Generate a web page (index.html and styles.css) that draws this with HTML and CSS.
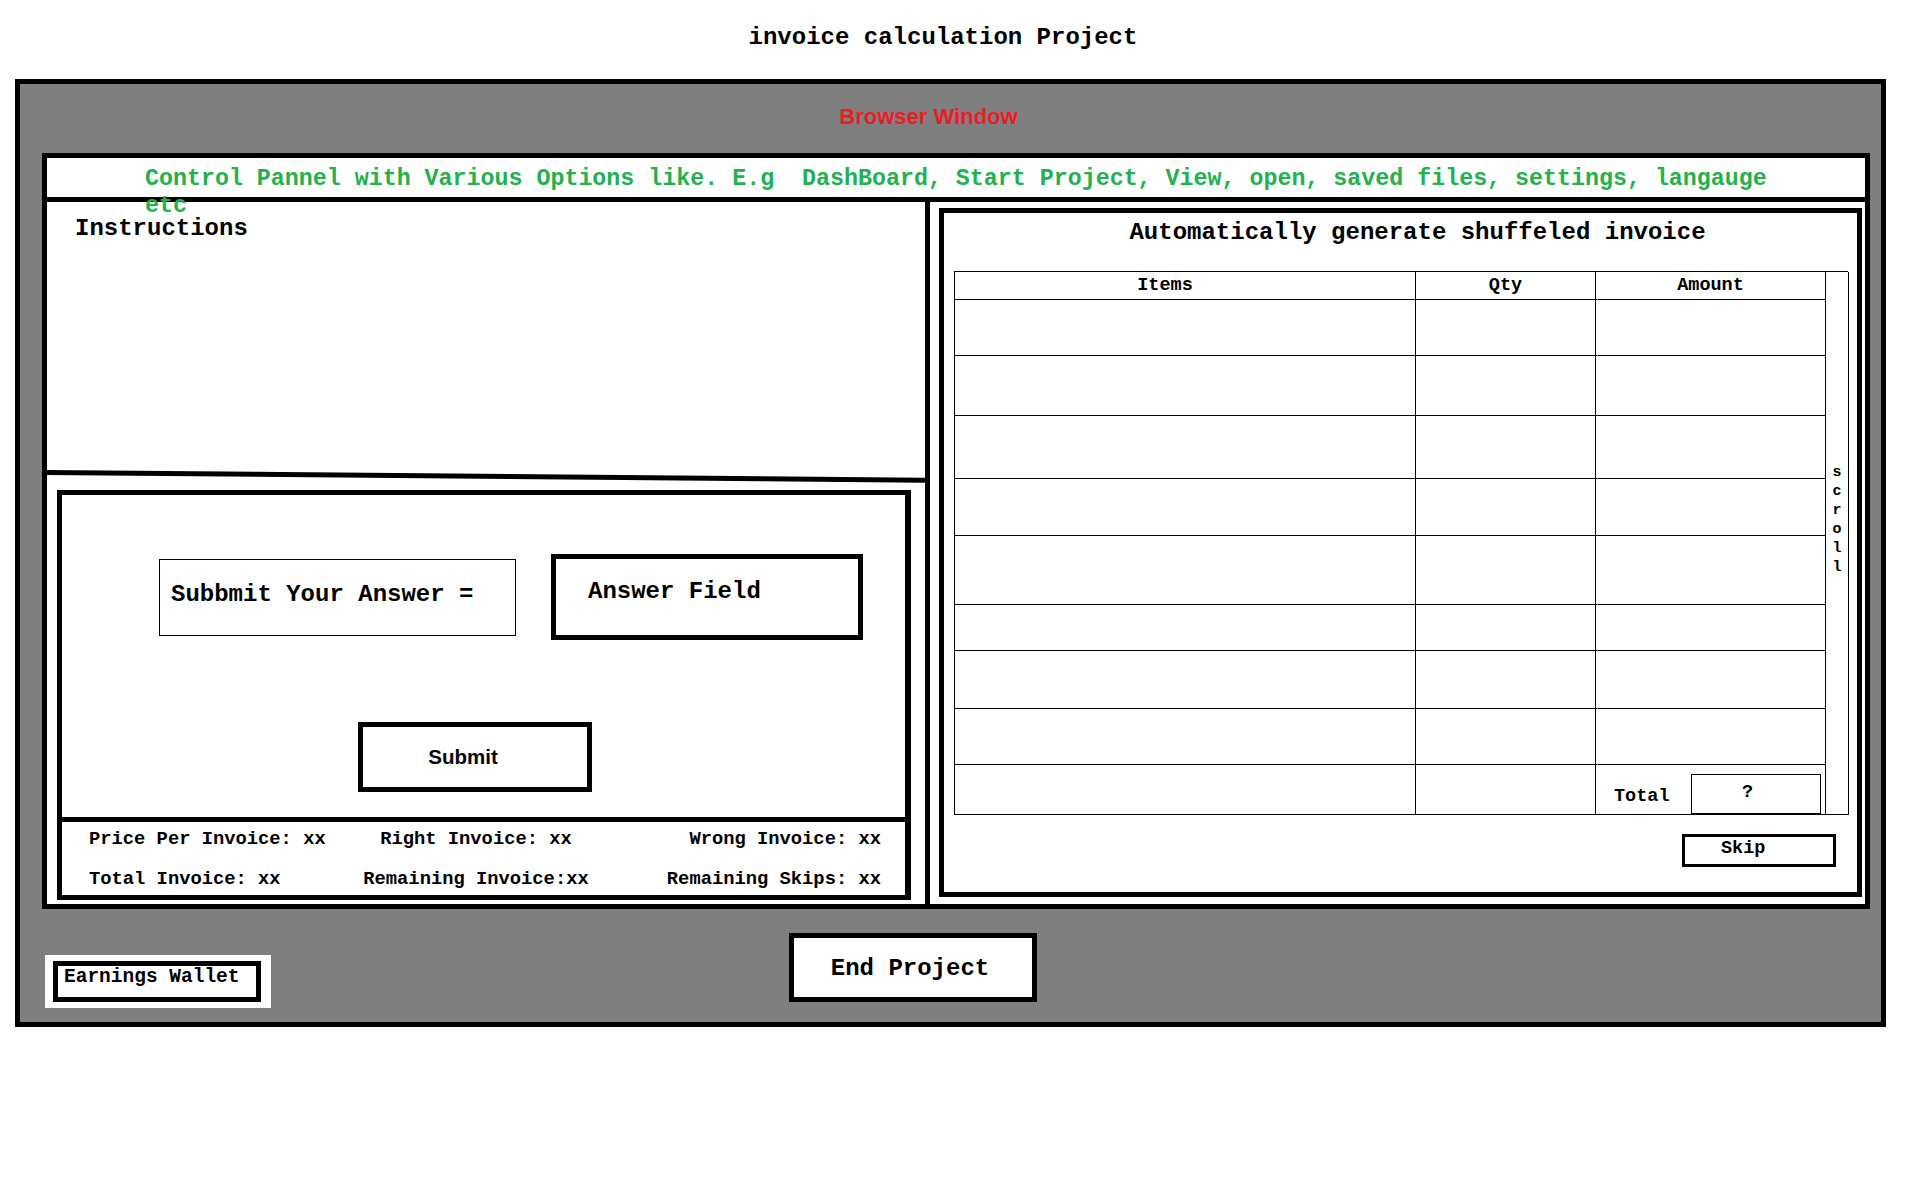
FILE: index.html
```html
<!DOCTYPE html>
<html lang="en">
<head>
<meta charset="utf-8">
<title>invoice calculation Project</title>
<link rel="stylesheet" href="styles.css">
</head>
<body>
<h1 class="page-title">invoice calculation Project</h1>
<div class="browser">
  <div class="browser-label">Browser Window</div>
  <div class="app">
    <div class="control-bar">
      <p class="control-text">Control Pannel with Various Options like. E.g&nbsp; DashBoard, Start Project, View, open, saved files, settings, langauge etc</p>
    </div>
    <div class="workspace">
      <div class="left-col">
        <div class="instructions">Instructions</div>
        <div class="section-line"></div>
        <div class="answer-box">
          <div class="answer-area">
            <div class="answer-row">
              <div class="prompt-box">Subbmit Your Answer =</div>
              <div class="field-box">Answer Field</div>
            </div>
            <button class="submit-btn">Submit</button>
          </div>
          <div class="stats">
            <span class="stat">Price Per Invoice: xx</span>
            <span class="stat stat-mid">Right Invoice: xx</span>
            <span class="stat stat-end">Wrong Invoice: xx</span>
            <span class="stat">Total Invoice: xx</span>
            <span class="stat stat-mid">Remaining Invoice:xx</span>
            <span class="stat stat-end">Remaining Skips: xx</span>
          </div>
        </div>
      </div>
      <div class="right-col">
        <div class="invoice">
          <h2 class="invoice-title">Automatically generate shuffeled invoice</h2>
          <div class="invoice-table">
            <div class="scroll-col"><span class="scroll-word">scroll</span></div>
            <div class="cell th th-items">Items</div>
            <div class="cell th">Qty</div>
            <div class="cell th">Amount</div>
            <div class="cell"></div><div class="cell"></div><div class="cell"></div>
            <div class="cell"></div><div class="cell"></div><div class="cell"></div>
            <div class="cell"></div><div class="cell"></div><div class="cell"></div>
            <div class="cell"></div><div class="cell"></div><div class="cell"></div>
            <div class="cell"></div><div class="cell"></div><div class="cell"></div>
            <div class="cell"></div><div class="cell"></div><div class="cell"></div>
            <div class="cell"></div><div class="cell"></div><div class="cell"></div>
            <div class="cell"></div><div class="cell"></div><div class="cell"></div>
            <div class="cell"></div><div class="cell"></div>
            <div class="cell total-cell"><span class="total-label">Total</span><span class="total-box">?</span></div>
          </div>
          <button class="skip-btn">Skip</button>
        </div>
      </div>
    </div>
  </div>
  <div class="footer">
    <div class="wallet"><div class="wallet-inner">Earnings Wallet</div></div>
    <button class="end-btn">End Project</button>
  </div>
</div>
</body>
</html>
```
FILE: styles.css
```css
* { box-sizing: border-box; }
html, body { margin: 0; padding: 0; background: #fff; }
body {
  width: 1914px;
  height: 1187px;
  font-family: "Liberation Mono", "Courier New", monospace;
  font-weight: bold;
  color: #000;
}
.page-title {
  margin: 0;
  height: 79px;
  padding: 26px 28px 0 0;
  font-size: 24px;
  line-height: 24px;
  text-align: center;
  font-weight: bold;
}
.browser {
  margin-left: 15px;
  width: 1871px;
  height: 948px;
  border: 5px solid #000;
  background: #7f7f7f;
}
.browser-label {
  height: 69px;
  padding: 22px 44px 0 0;
  text-align: center;
  font-family: "Liberation Sans", Arial, sans-serif;
  font-weight: bold;
  font-size: 22px;
  line-height: 22px;
  color: #ed1c24;
}
.app {
  margin-left: 22px;
  width: 1828px;
  height: 756px;
  border: 5px solid #000;
  background: #fff;
  display: flex;
  flex-direction: column;
}
.control-bar {
  flex: none;
  height: 44px;
  border-bottom: 5px solid #000;
  padding: 8px 0 0 98px;
}
.control-text {
  margin: 0;
  width: 1650px;
  font-size: 23.3px;
  line-height: 27px;
  color: #22b14c;
}
.workspace {
  flex: 1;
  display: flex;
}
.left-col {
  width: 878px;
  display: flex;
  flex-direction: column;
}
.instructions {
  height: 268px;
  padding: 15px 0 0 28px;
  font-size: 24px;
  line-height: 24px;
}
.section-line {
  height: 5px;
  width: 880px;
  margin-left: -2px;
  background: #000;
  transform-origin: left center;
  transform: rotate(0.5deg);
}
.answer-box {
  margin: 15px 0 0 10px;
  width: 854px;
  height: 410px;
  border: 5px solid #000;
  border-right-width: 6px;
  display: flex;
  flex-direction: column;
}
.answer-area {
  flex: none;
  height: 327px;
  border-bottom: 5px solid #000;
  padding-top: 59px;
}
.answer-row {
  display: flex;
  align-items: center;
  gap: 35px;
  margin-left: 97px;
}
.prompt-box {
  width: 357px;
  height: 77px;
  border: 1px solid #000;
  display: flex;
  align-items: center;
  padding: 0 0 4px 11px;
  font-size: 24px;
  line-height: 24px;
}
.field-box {
  width: 312px;
  height: 86px;
  border: 5px solid #000;
  padding: 21px 0 0 32px;
  font-size: 24px;
  line-height: 24px;
}
.submit-btn {
  display: block;
  margin: 82px 0 0 296px;
  width: 234px;
  height: 70px;
  border: 5px solid #000;
  border-radius: 0;
  background: #fff;
  color: #000;
  padding: 0 24px 0 0;
  font-family: "Liberation Sans", Arial, sans-serif;
  font-weight: bold;
  font-size: 20.5px;
}
.stats {
  flex: 1;
  display: grid;
  grid-template-columns: 211px 352px 1fr;
  row-gap: 18px;
  align-content: start;
  padding: 6px 24px 0 27px;
  font-size: 18.8px;
  line-height: 22px;
}
.stat { white-space: nowrap; }
.stat-mid { justify-self: center; }
.stat-end { justify-self: end; }
.right-col {
  flex: 1;
  border-left: 5px solid #000;
}
.invoice {
  margin: 6px 0 0 9px;
  width: 923px;
  height: 689px;
  border: 5px solid #000;
}
.invoice-title {
  margin: 0;
  height: 58px;
  padding: 8px 0 0 34px;
  text-align: center;
  font-size: 24px;
  line-height: 24px;
  font-weight: bold;
}
.invoice-table {
  margin-left: 10px;
  width: 894px;
  display: grid;
  grid-template-columns: 461px 180px 230px 23px;
  grid-template-rows: 28px 56px 60px 63px 57px 69px 46px 58px 56px 50px;
  border-top: 1px solid #000;
  border-left: 1px solid #000;
}
.cell {
  border-right: 1px solid #000;
  border-bottom: 1px solid #000;
}
.th {
  display: flex;
  align-items: center;
  justify-content: center;
  font-size: 18.5px;
  line-height: 22px;
}
.th-items { padding-right: 40px; }
.scroll-col {
  grid-column: 4;
  grid-row: 1 / -1;
  border-right: 1px solid #000;
  border-bottom: 1px solid #000;
  padding-top: 191px;
  font-size: 15px;
  line-height: 19px;
}
.scroll-word {
  display: block;
  width: 1ch;
  margin: 0 auto;
  word-break: break-all;
}
.total-cell {
  display: flex;
  align-items: flex-end;
}
.total-label {
  padding-left: 18px;
  margin-bottom: 6px;
  font-size: 18.5px;
  line-height: 22px;
}
.total-box {
  margin-left: 21px;
  width: 130px;
  height: 40px;
  border: 1px solid #000;
  display: flex;
  align-items: center;
  justify-content: center;
  padding: 0 16px 4px 0;
  font-size: 18.5px;
}
.skip-btn {
  display: block;
  margin: 19px 0 0 738px;
  width: 154px;
  height: 33px;
  border: 3px solid #000;
  border-radius: 0;
  background: #fff;
  color: #000;
  padding: 0 0 5px 36px;
  text-align: left;
  font-family: "Liberation Mono", "Courier New", monospace;
  font-weight: bold;
  font-size: 18.5px;
}
.footer {
  height: 113px;
  display: flex;
  align-items: flex-start;
}
.wallet {
  margin: 46px 0 0 25px;
  width: 226px;
  height: 53px;
  background: #fff;
  padding: 6px 10px 6px 8px;
}
.wallet-inner {
  height: 100%;
  border: 5px solid #000;
  padding: 1px 0 0 6px;
  font-size: 19.5px;
  line-height: 20px;
  white-space: nowrap;
}
.end-btn {
  margin: 24px 0 0 518px;
  width: 248px;
  height: 69px;
  border: 5px solid #000;
  border-radius: 0;
  background: #fff;
  color: #000;
  padding: 2px 6px 0 0;
  font-family: "Liberation Mono", "Courier New", monospace;
  font-weight: bold;
  font-size: 24px;
}
```
